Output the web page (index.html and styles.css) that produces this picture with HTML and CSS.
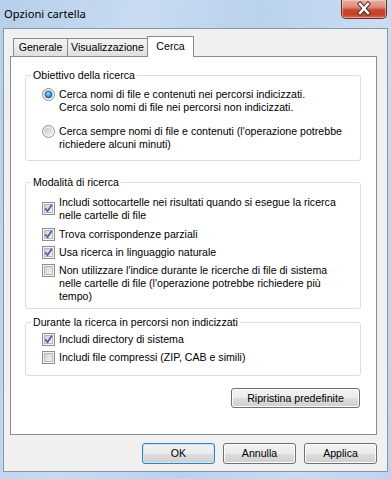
FILE: index.html
```html
<!DOCTYPE html>
<html lang="it">
<head>
    <meta charset="UTF-8">
    <title>Opzioni cartella</title>
    <link rel="stylesheet" href="styles.css">
</head>
<body>

    <div class="window">

        <!-- Title bar -->
        <div class="titlebar">
            <span class="title">Opzioni cartella</span>
            <div class="close-btn">
                <svg width="46" height="19" viewBox="0 0 46 19">
                    <path d="M19 5 L27 14 M27 5 L19 14" stroke="#4a2a26" stroke-width="4.2" stroke-linecap="square"/>
                    <path d="M19 5 L27 14 M27 5 L19 14" stroke="#ffffff" stroke-width="2.4" stroke-linecap="square"/>
                </svg>
            </div>
        </div>

        <!-- Client area -->
        <div class="client">

            <div class="tabs">
                <div class="tab tab-general">Generale</div>
                <div class="tab tab-view">Visualizzazione</div>
                <div class="tab tab-active">Cerca</div>
            </div>

            <div class="panel">

                <!-- Obiettivo della ricerca -->
                <div class="group group-target">
                    <div class="legend">Obiettivo della ricerca</div>
                    <div class="option opt-first">
                        <svg class="ctl" viewBox="0 0 13 13">
                            <circle cx="6.5" cy="6.5" r="6" fill="url(#ringBg)" stroke="#8e8f8f"/>
                            <circle cx="6.5" cy="6.5" r="3.6" fill="url(#radioDot)" stroke="#1f5b96" stroke-width="0.7"/>
                        </svg>
                        <span>Cerca nomi di file e contenuti nei percorsi indicizzati.<br>Cerca solo nomi di file nei percorsi non indicizzati.</span>
                    </div>
                    <div class="option opt-second">
                        <svg class="ctl" viewBox="0 0 13 13">
                            <circle cx="6.5" cy="6.5" r="6" fill="url(#ringBg)" stroke="#8e8f8f"/>
                            <circle cx="6.5" cy="6.5" r="4" fill="url(#radioOff)"/>
                        </svg>
                        <span>Cerca sempre nomi di file e contenuti (l'operazione potrebbe<br>richiedere alcuni minuti)</span>
                    </div>
                </div>

                <!-- Modalita di ricerca -->
                <div class="group group-mode">
                    <div class="legend">Modalità di ricerca</div>
                    <div class="option opt-sub">
                        <svg class="ctl ctl-mid" viewBox="0 0 13 13">
                            <rect x="0.5" y="0.5" width="12" height="12" fill="#f4f4f4" stroke="#8e8f8f"/>
                            <rect x="2.5" y="2.5" width="8" height="8" fill="url(#boxBg)" stroke="#b4b8bd"/>
                            <path d="M3.2 6.4 L5.6 9.2 L9.8 2.8" fill="none" stroke="#4a5e9a" stroke-width="1.7"/>
                        </svg>
                        <span>Includi sottocartelle nei risultati quando si esegue la ricerca<br>nelle cartelle di file</span>
                    </div>
                    <div class="option opt-partial">
                        <svg class="ctl" viewBox="0 0 13 13">
                            <rect x="0.5" y="0.5" width="12" height="12" fill="#f4f4f4" stroke="#8e8f8f"/>
                            <rect x="2.5" y="2.5" width="8" height="8" fill="url(#boxBg)" stroke="#b4b8bd"/>
                            <path d="M3.2 6.4 L5.6 9.2 L9.8 2.8" fill="none" stroke="#4a5e9a" stroke-width="1.7"/>
                        </svg>
                        <span>Trova corrispondenze parziali</span>
                    </div>
                    <div class="option opt-natural">
                        <svg class="ctl" viewBox="0 0 13 13">
                            <rect x="0.5" y="0.5" width="12" height="12" fill="#f4f4f4" stroke="#8e8f8f"/>
                            <rect x="2.5" y="2.5" width="8" height="8" fill="url(#boxBg)" stroke="#b4b8bd"/>
                            <path d="M3.2 6.4 L5.6 9.2 L9.8 2.8" fill="none" stroke="#4a5e9a" stroke-width="1.7"/>
                        </svg>
                        <span>Usa ricerca in linguaggio naturale</span>
                    </div>
                    <div class="option opt-index">
                        <svg class="ctl" viewBox="0 0 13 13">
                            <rect x="0.5" y="0.5" width="12" height="12" fill="#f4f4f4" stroke="#8e8f8f"/>
                            <rect x="2.5" y="2.5" width="8" height="8" fill="url(#boxBg)" stroke="#b4b8bd"/>
                        </svg>
                        <span>Non utilizzare l'indice durante le ricerche di file di sistema<br>nelle cartelle di file (l'operazione potrebbe richiedere più<br>tempo)</span>
                    </div>
                </div>

                <!-- Durante la ricerca in percorsi non indicizzati -->
                <div class="group group-nonindexed">
                    <div class="legend">Durante la ricerca in percorsi non indicizzati</div>
                    <div class="option opt-system">
                        <svg class="ctl" viewBox="0 0 13 13">
                            <rect x="0.5" y="0.5" width="12" height="12" fill="#f4f4f4" stroke="#8e8f8f"/>
                            <rect x="2.5" y="2.5" width="8" height="8" fill="url(#boxBg)" stroke="#b4b8bd"/>
                            <path d="M3.2 6.4 L5.6 9.2 L9.8 2.8" fill="none" stroke="#4a5e9a" stroke-width="1.7"/>
                        </svg>
                        <span>Includi directory di sistema</span>
                    </div>
                    <div class="option opt-zip">
                        <svg class="ctl" viewBox="0 0 13 13">
                            <rect x="0.5" y="0.5" width="12" height="12" fill="#f4f4f4" stroke="#8e8f8f"/>
                            <rect x="2.5" y="2.5" width="8" height="8" fill="url(#boxBg)" stroke="#b4b8bd"/>
                        </svg>
                        <span>Includi file compressi (ZIP, CAB e simili)</span>
                    </div>
                </div>

                <button class="btn btn-restore" type="button">Ripristina predefinite</button>
            </div>

            <!-- Dialog buttons -->
            <div class="dialog-buttons">
                <button class="btn btn-default" type="button">OK</button>
                <button class="btn" type="button">Annulla</button>
                <button class="btn" type="button">Applica</button>
            </div>
        </div>
    </div>

    <!-- shared gradients -->
    <svg class="defs" width="0" height="0">
        <defs>
            <linearGradient id="ringBg" x1="0" y1="0" x2="1" y2="1">
                <stop offset="0" stop-color="#e6e6e6"/>
                <stop offset="1" stop-color="#ffffff"/>
            </linearGradient>
            <linearGradient id="radioOff" x1="0" y1="0" x2="1" y2="1">
                <stop offset="0" stop-color="#c4c4c4"/>
                <stop offset="1" stop-color="#f2f2f2"/>
            </linearGradient>
            <radialGradient id="radioDot" cx="0.45" cy="0.4" r="0.6">
                <stop offset="0" stop-color="#b4e4fb"/>
                <stop offset="0.5" stop-color="#4c98dc"/>
                <stop offset="1" stop-color="#1d5c9c"/>
            </radialGradient>
            <linearGradient id="boxBg" x1="0" y1="0" x2="1" y2="1">
                <stop offset="0" stop-color="#cbcfd5"/>
                <stop offset="1" stop-color="#f7f7f7"/>
            </linearGradient>
        </defs>
    </svg>

</body>
</html>
```

FILE: styles.css
```css
* {
    box-sizing: border-box;
}

body {
    margin: 0;
    width: 391px;
    height: 479px;
    overflow: hidden;
    font-family: "Liberation Sans", Arial, sans-serif;
    font-size: 10.6px;
    color: #000;
    background-color: #c2d7ef;
}

/* Window frame */
.window {
    height: 479px;
    display: flex;
    flex-direction: column;
    padding: 0 3px 7px 3px;
    background: linear-gradient(100deg, #b6cfea 0%, #c8dbf1 30%, #bad2ec 55%, #c9dcf2 80%, #bed4ee 100%);
}

.titlebar {
    height: 28px;
    flex-shrink: 0;
    display: flex;
    justify-content: space-between;
    align-items: flex-start;
}

.title {
    font-family: "Noto Sans", "Liberation Sans", sans-serif;
    font-size: 11.2px;
    line-height: 16px;
    padding: 6px 0 0 1px;
    color: #000;
}

.close-btn {
    width: 46px;
    height: 19px;
    margin-right: 1px;
    border: 1px solid #6e2a21;
    border-top: none;
    border-radius: 0 0 5px 5px;
    background: linear-gradient(#eab0a4 0%, #dc8a78 40%, #c9482f 55%, #c4412a 80%, #d66a52 100%);
    box-shadow: inset 0 0 0 1px rgba(255, 220, 210, 0.5);
}

.close-btn svg {
    display: block;
    margin: -1px 0 0 -1px;
}

/* Client area */
.client {
    flex: 1;
    display: flex;
    flex-direction: column;
    background-color: #f0f0f0;
    border: 1px solid #8796ab;
    padding: 7px 10px 7px 6px;
}

/* Tabs */
.tabs {
    display: flex;
    align-items: flex-end;
    height: 21px;
    margin-bottom: -1px;
    padding-left: 3px;
    position: relative;
    z-index: 1;
}

.tab {
    height: 19px;
    margin-left: -1px;
    border: 1px solid #898c95;
    background: linear-gradient(#f3f3f3 0%, #ebebeb 50%, #dfdfdf 100%);
    line-height: 17px;
    text-align: center;
    white-space: nowrap;
}

.tab-general {
    width: 55px;
    margin-left: 0;
}

.tab-view {
    width: 81px;
}

.tab-active {
    width: 47px;
    height: 21px;
    border-bottom: none;
    background: #fff;
    line-height: 18px;
    padding-bottom: 2px;
}

/* Tab page */
.panel {
    height: 379px;
    display: flex;
    flex-direction: column;
    border: 1px solid #898c95;
    background-color: #fff;
    padding: 0 15px 0 14px;
}

.group {
    border: 1px solid #d5dfe5;
    border-radius: 3px;
    padding: 0 8px 0 16px;
}

.legend {
    width: fit-content;
    margin: -7px 0 0 -11px;
    padding: 0 2px;
    background-color: #fff;
    line-height: 13px;
    white-space: nowrap;
}

.option {
    display: flex;
    align-items: flex-start;
    gap: 4px;
    line-height: 13px;
    white-space: nowrap;
}

.ctl {
    flex-shrink: 0;
    width: 13px;
    height: 13px;
}

.ctl-mid {
    margin-top: 6px;
}

.group-target {
    margin-top: 18px;
    padding-bottom: 9px;
}

.opt-first {
    margin-top: 6px;
}

.opt-second {
    margin-top: 11px;
}

.group-mode {
    margin-top: 21px;
    padding-bottom: 5px;
}

.opt-sub {
    margin-top: 7px;
}

.opt-partial {
    margin-top: 6px;
}

.opt-natural,
.opt-index {
    margin-top: 5px;
}

.group-nonindexed {
    margin-top: 13px;
    padding-bottom: 11px;
}

.opt-system {
    margin-top: 4px;
}

.opt-zip {
    margin-top: 5px;
}

/* Buttons */
.btn {
    height: 21px;
    padding: 0;
    border: 1px solid #707070;
    border-radius: 3px;
    background: linear-gradient(#f2f2f2 0%, #ebebeb 50%, #dddddd 51%, #cfcfcf 100%);
    box-shadow: inset 0 0 0 1px #fcfcfc;
    font-family: inherit;
    font-size: inherit;
    color: #000;
    line-height: 19px;
}

.btn-restore {
    width: 129px;
    height: 20px;
    line-height: 18px;
    margin: 12px 1px 0 0;
    align-self: flex-end;
}

.dialog-buttons {
    display: flex;
    justify-content: flex-end;
    gap: 8px;
    margin-top: 8px;
}

.dialog-buttons .btn {
    width: 73px;
}

.btn-default {
    border-color: #3c7fb1;
    box-shadow: inset 0 0 0 1px #c5e6f8;
}

.defs {
    display: block;
    width: 0;
    height: 0;
}
```
